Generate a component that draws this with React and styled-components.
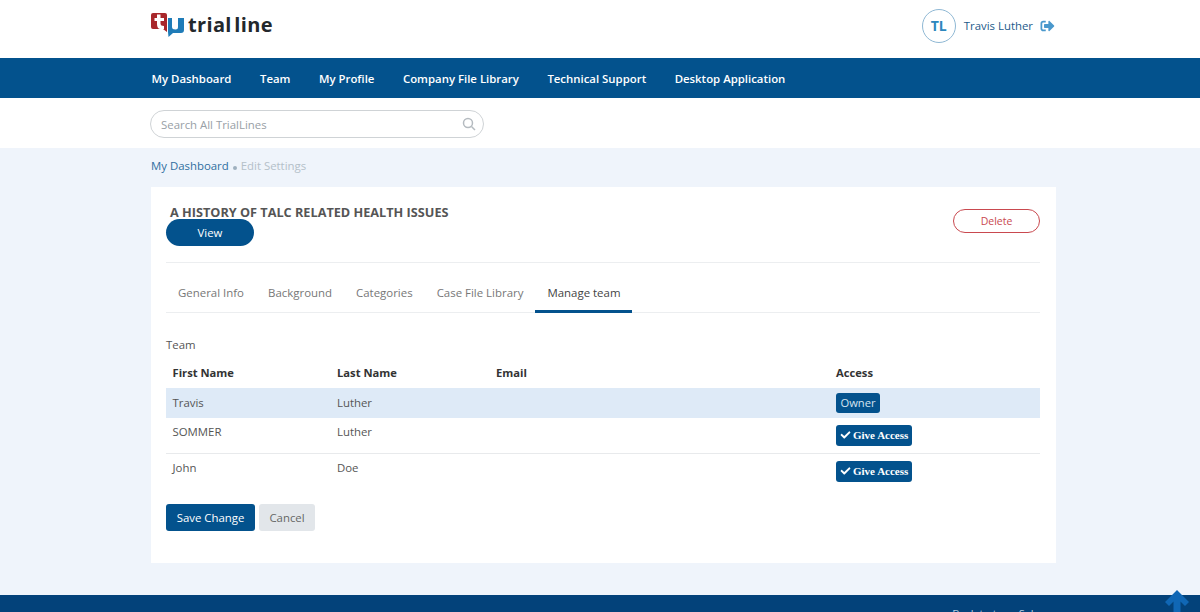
import React from "react";
import styled, { createGlobalStyle } from "styled-components";
import { FaCheck, FaSignOutAlt } from "react-icons/fa";

const Global = createGlobalStyle`
  html, body { margin: 0; padding: 0; background: #eff4fb; overflow: hidden; height: 612px; }
  body { font-family: "Open Sans", "Liberation Sans", sans-serif; font-size: 11.4px; color: #555; }
  * { box-sizing: border-box; }
`;
const Page = styled.div`display: flex; flex-direction: column; height: 612px; overflow: hidden; position: relative;`;
const Top = styled.header`height: 58px; background: #fff; padding: 0 145px 0 150px; display: flex; align-items: center; justify-content: space-between; flex: none;`;
const Logo = styled.div`display: flex; align-items: center; gap: 3px; margin-top: -9px;`;
const LogoText = styled.span`font-family: "Open Sans", sans-serif; font-size: 20px; font-weight: 700; color: #23282c; letter-spacing: 0.35px; word-spacing: -3px; width: 83px; white-space: nowrap;`;
const User = styled.div`display: flex; align-items: center; margin-top: -7px;`;
const Avatar = styled.div`width: 34px; height: 34px; border-radius: 50%; border: 1px solid #8fb8d4; color: #2d87bd; font-weight: 700; font-size: 14px; display: flex; align-items: center; justify-content: center; margin-right: 8px;`;
const UserName = styled.span`font-size: 11.4px; color: #1d5a8a; margin-right: 7px;`;
const SignOut = styled(FaSignOutAlt)`width: 15px; height: 14px; color: #4a98cc;`;
const Nav = styled.nav`height: 40px; background: #03528d; display: flex; align-items: center; padding: 1px 0 0 151.5px; gap: 28.5px; flex: none;`;
const NavLink = styled.a`color: #fff; font-size: 11.4px; font-weight: 600; white-space: nowrap;`;
const SearchBand = styled.div`height: 50px; background: #fff; padding: 12px 0 0 150px; flex: none;`;
const Search = styled.div`width: 334px; height: 28px; border: 1px solid #cfd3d6; border-radius: 14px; display: flex; align-items: center; justify-content: space-between; padding: 0 7px 0 10px; color: #98a0a6; font-size: 11.4px;`;
const Crumbs = styled.div`height: 39px; padding: 10px 0 0 151px; font-size: 11.4px; display: flex; align-items: flex-start; flex: none;`;
const CrumbLink = styled.a`color: #2f6f9f;`;
const Dot = styled.span`width: 4px; height: 4px; border-radius: 50%; background: #9fb0bf; margin: 8px 4px 0 4px;`;
const CrumbNow = styled.span`color: #b4c0c9;`;
const Card = styled.main`width: 905px; height: 376px; margin-left: 151px; background: #fff; padding: 0 16px 0 15px; flex: none;`;
const CardHead = styled.div`height: 76px; border-bottom: 1px solid #eceef0; display: flex; justify-content: space-between; align-items: flex-start;`;
const Title = styled.h1`margin: 19px 0 0 4px; font-size: 12.7px; line-height: 13px; font-weight: 700; color: #555; white-space: nowrap;`;
const ViewButton = styled.div`width: 88px; height: 27px; border-radius: 14px; background: #03528d; color: #fff; font-size: 11.4px; display: flex; align-items: center; justify-content: center; padding-bottom: 1px;`;
const DeleteButton = styled.div`width: 87px; height: 24px; margin-top: 22px; border-radius: 12px; border: 1px solid #c9494f; color: #c9494f; font-size: 10.5px; display: flex; align-items: center; justify-content: center; padding-bottom: 1px;`;
const Tabs = styled.div`height: 50px; border-bottom: 1px solid #eceef0; display: flex; align-items: stretch;`;
const Tab = styled.div`padding: 8px 12px 0; display: flex; align-items: center; color: ${p => (p.$active ? "#444" : "#777")}; font-size: 11.44px; white-space: nowrap; box-shadow: ${p => (p.$active ? "inset 0 -3px 0 #03528d" : "none")}; margin-bottom: -1px;`;
const Caption = styled.div`margin: 23px 0 0 0; height: 18px; line-height: 18px; font-size: 11.4px; color: #555;`;
const Table = styled.div`margin-top: 4px;`;
const Row = styled.div`display: grid; grid-template-columns: 164.5px 159px 340px 1fr; align-items: center; height: ${p => p.$h}px; background: ${p => (p.$hl ? "#deeaf7" : "transparent")}; border-bottom: ${p => (p.$line ? "1px solid #e8eaec" : "none")}; padding-left: 6.5px;`;
const HeadCell = styled.div`font-size: 11.2px; font-weight: 700; color: #333; padding-bottom: 1px;`;
const Cell = styled.div`font-size: 11.4px; color: #555; padding-bottom: ${p => p.$lift || 0}px;`;
const OwnerTag = styled.span`display: inline-flex; align-items: center; height: 20px; width: 44px; justify-content: center; background: #03528d; border-radius: 3px; color: #d5e4f0; font-size: 11.2px;`;
const GiveButton = styled.span`display: inline-flex; align-items: center; gap: 2px; height: 21px; width: 76px; padding: 0 0 1px 4px; background: #03528d; border-radius: 3px; color: #fff; font-family: "Liberation Serif", serif; font-weight: 700; font-size: 11px; white-space: nowrap;`;
const CheckIcon = styled(FaCheck)`width: 11px; height: 10px; flex: none;`;
const Actions = styled.div`display: flex; gap: 4px; margin-top: 15px;`;
const SaveButton = styled.div`width: 89px; height: 27px; background: #03528d; border-radius: 3px; color: #fff; font-size: 11.4px; display: flex; align-items: center; justify-content: center;`;
const CancelButton = styled.div`width: 56px; height: 27px; background: #e2e6ea; border-radius: 3px; color: #666; font-size: 11.4px; display: flex; align-items: center; justify-content: center;`;
const Footer = styled.footer`margin-top: 32px; height: 60px; background: #03427a; padding: 11px 155px 0 0; text-align: right; color: #b9cde0; font-size: 11px; flex: none;`;
const ToTop = styled.svg`position: absolute; right: 0; bottom: 0; width: 46px; height: 23px;`;

const nav = ["My Dashboard", "Team", "My Profile", "Company File Library", "Technical Support", "Desktop Application"];
const tabs = ["General Info", "Background", "Categories", "Case File Library", "Manage team"];

const Give = () => <GiveButton><CheckIcon />Give Access</GiveButton>;

export default function App() {
  return (
    <Page>
      <Global />
      <Top>
        <Logo>
          <svg width="35" height="25" viewBox="0 0 35 25">
            <path d="M1 3 Q1 1 3 1 H15 Q17 1 17 3 V20 L13 17 H3 Q1 17 1 15 Z" fill="#a8272b" />
            <path d="M7 2.5 H10.5 V6 H14 V9 H10.5 V11.5 Q10.5 14 14 14 V17 H10.5 Q7 17 7 12 V9 H4.5 V6 H7 Z" fill="#fff" />
            <path d="M18 6 H22 V15 Q22 17.5 25.5 17.5 Q28 17.5 28 15 V6 H34 V18 Q34 21 31 21 H23 L18.5 25 L18 20 Z" fill="#1f7cb8" />
          </svg>
          <LogoText>trial line</LogoText>
        </Logo>
        <User>
          <Avatar>TL</Avatar>
          <UserName>Travis Luther</UserName>
          <SignOut />
        </User>
      </Top>
      <Nav>{nav.map(n => <NavLink key={n}>{n}</NavLink>)}</Nav>
      <SearchBand>
        <Search>
          <span>Search All TrialLines</span>
          <svg width="14" height="14" viewBox="0 0 14 14" fill="none" stroke="#b5bbc0" strokeWidth="1.5">
            <circle cx="6" cy="6" r="4.5" /><path d="M9.5 9.5 L13 13" />
          </svg>
        </Search>
      </SearchBand>
      <Crumbs><CrumbLink>My Dashboard</CrumbLink><Dot /><CrumbNow>Edit Settings</CrumbNow></Crumbs>
      <Card>
        <CardHead>
          <div>
            <Title>A HISTORY OF TALC RELATED HEALTH ISSUES</Title>
            <ViewButton>View</ViewButton>
          </div>
          <DeleteButton>Delete</DeleteButton>
        </CardHead>
        <Tabs>{tabs.map((t, i) => <Tab key={t} $active={i === 4}>{t}</Tab>)}</Tabs>
        <Caption>Team</Caption>
        <Table>
          <Row $h={30}>
            <HeadCell>First Name</HeadCell><HeadCell>Last Name</HeadCell><HeadCell>Email</HeadCell><HeadCell>Access</HeadCell>
          </Row>
          <Row $h={30} $hl>
            <Cell $lift={2}>Travis</Cell><Cell $lift={2}>Luther</Cell><Cell /><Cell $lift={1}><OwnerTag>Owner</OwnerTag></Cell>
          </Row>
          <Row $h={36} $line>
            <Cell $lift={9}>SOMMER</Cell><Cell $lift={9}>Luther</Cell><Cell /><Cell><Give /></Cell>
          </Row>
          <Row $h={35}>
            <Cell $lift={9}>John</Cell><Cell $lift={9}>Doe</Cell><Cell /><Cell><Give /></Cell>
          </Row>
        </Table>
        <Actions><SaveButton>Save Change</SaveButton><CancelButton>Cancel</CancelButton></Actions>
      </Card>
      <Footer>Back to top · Sales</Footer>
      <ToTop viewBox="0 0 46 23"><path d="M23 1 L35 13 L31 17 L26.5 12.5 V23 H19.5 V12.5 L15 17 L11 13 Z" fill="#1067b5" /></ToTop>
    </Page>
  );
}
